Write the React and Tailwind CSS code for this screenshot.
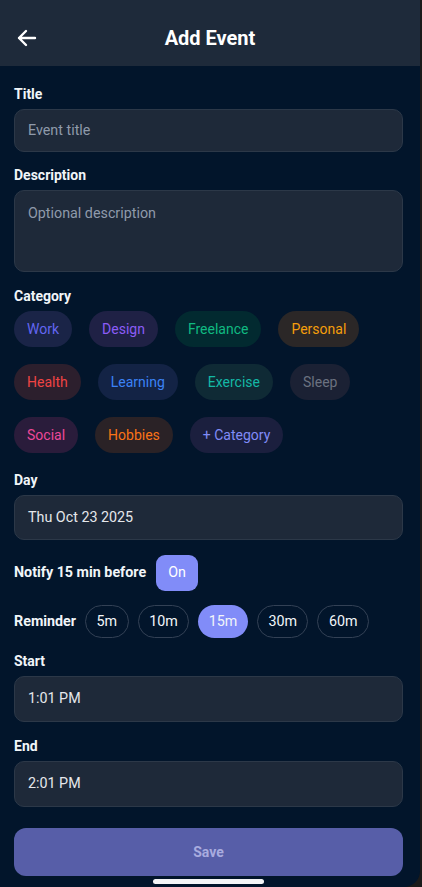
import React from 'react';

const categories = [
    [
        { name: "Work", cls: "bg-[#1a2447] text-[#6366f1]" },
        { name: "Design", cls: "bg-[#1f2145] text-[#8b5cf6]" },
        { name: "Freelance", cls: "bg-[#022a30] text-[#10b981]" },
        { name: "Personal", cls: "bg-[#2b2727] text-[#f59e0b]" },
    ],
    [
        { name: "Health", cls: "bg-[#2c1f2d] text-[#ef4444]" },
        { name: "Learning", cls: "bg-[#132345] text-[#3b82f6]" },
        { name: "Exercise", cls: "bg-[#0f2a35] text-[#14b8a6]" },
        { name: "Sleep", cls: "bg-[#1b2134] text-[#6b7280]" },
    ],
    [
        { name: "Social", cls: "bg-[#2a1c3b] text-[#ec4899]" },
        { name: "Hobbies", cls: "bg-[#2a2226] text-[#f97316]" },
        { name: "+ Category", cls: "bg-[#1b1f3e] text-[#818cf8]" },
    ],
];

const reminders = ["5m", "10m", "15m", "30m", "60m"];

const Label = ({ children }) => (
    <p className="mb-[5px] text-[14px] font-bold leading-[20px] text-[#f1f5f9]">{children}</p>
);

// input-looking box, h is passed as a class
const Field = ({ children, muted, h }) => (
    <div
        className={`rounded-[10px] border border-[#2c3848] bg-[#1e2939] px-[13px] text-[14.3px] ${
            muted ? "text-[#8f9aab]" : "text-[#e5e7eb]"
        } ${h}`}
    >
        {children}
    </div>
);

export default function App() {
    return (
        <div className="min-h-[887px] w-[422px] bg-[#1a1a1a] font-['Roboto',sans-serif]">
            <div className="relative h-[887px] w-[420px] overflow-hidden rounded-br-[16px] bg-[#02152b]">
                {/* header */}
                <div className="relative flex h-[66px] items-center justify-center bg-[#1e2a3a]">
                    <svg
                        className="absolute left-[16px] top-[28px]"
                        width="22"
                        height="20"
                        viewBox="0 0 22 20"
                        fill="none"
                        stroke="white"
                        strokeWidth="2.4"
                        strokeLinecap="round"
                        strokeLinejoin="round"
                    >
                        <path d="M19 10H3M10 3L3 10L10 17" />
                    </svg>
                    <h1 className="pt-[10px] text-[20px] font-bold text-white">Add Event</h1>
                </div>

                <div className="pl-[14px] pr-[17px] pt-[18px]">
                    <Label>Title</Label>
                    <Field muted h="h-[43px] flex items-center">Event title</Field>

                    <div className="mt-[13px]">
                        <Label>Description</Label>
                        <Field muted h="h-[82px] pt-[12px]">Optional description</Field>
                    </div>

                    <div className="mt-[14px]">
                        <Label>Category</Label>
                        <div className="flex flex-col gap-[17px]">
                            {categories.map((row, i) => (
                                <div key={i} className="flex gap-[17px]">
                                    {row.map((c) => (
                                        <span
                                            key={c.name}
                                            className={`flex h-[36px] items-center rounded-full px-[13px] text-[14px] ${c.cls}`}
                                        >
                                            {c.name}
                                        </span>
                                    ))}
                                </div>
                            ))}
                        </div>
                    </div>

                    <div className="mt-[17px]">
                        <Label>Day</Label>
                        <Field h="h-[45px] flex items-center">Thu Oct 23 2025</Field>
                    </div>

                    <div className="mt-[15px] flex items-center gap-[10px]">
                        <span className="text-[14.3px] font-bold text-[#f1f5f9]">Notify 15 min before</span>
                        <span className="flex h-[36px] w-[42px] items-center justify-center rounded-[9px] bg-[#818cf8] text-[14.3px] text-white">
                            On
                        </span>
                    </div>

                    <div className="mt-[14px] flex items-center gap-[9px]">
                        <span className="text-[14.3px] font-bold text-[#f1f5f9]">Reminder</span>
                        {reminders.map((r) => (
                            <span
                                key={r}
                                className={`flex h-[33px] items-center rounded-full px-[10.5px] text-[14.3px] text-[#f1f5f9] ${
                                    r === "15m" ? "bg-[#818cf8]" : "border border-[#334155]"
                                }`}
                            >
                                {r}
                            </span>
                        ))}
                    </div>

                    <div className="mt-[13px]">
                        <Label>Start</Label>
                        <Field h="h-[46px] flex items-center">1:01 PM</Field>
                    </div>

                    <div className="mt-[14px]">
                        <Label>End</Label>
                        <Field h="h-[46px] flex items-center">2:01 PM</Field>
                    </div>

                    <button className="mt-[21px] flex h-[48px] w-full items-center justify-center rounded-[12px] bg-[#575ea8] text-[14px] font-bold text-[#a9acdf]">
                        Save
                    </button>
                </div>

                <div className="absolute bottom-[3px] left-[153px] h-[5px] w-[111px] rounded-full bg-[#f3f4f6]" />
            </div>
        </div>
    );
}
